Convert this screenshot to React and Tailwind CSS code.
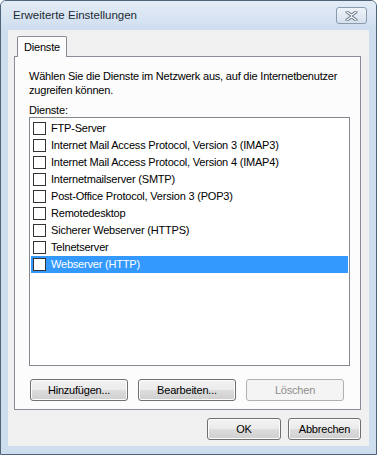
import React from "react";

const items = [
  "FTP-Server",
  "Internet Mail Access Protocol, Version 3 (IMAP3)",
  "Internet Mail Access Protocol, Version 4 (IMAP4)",
  "Internetmailserver (SMTP)",
  "Post-Office Protocol, Version 3 (POP3)",
  "Remotedesktop",
  "Sicherer Webserver (HTTPS)",
  "Telnetserver",
  "Webserver (HTTP)",
];

function Btn({ children, disabled, className = "" }) {
  return (
    <div
      className={
        "flex h-[22px] items-center justify-center rounded-[3px] border text-[11px] tracking-[-0.2px] " +
        (disabled
          ? "border-[#adb2b5] bg-[#f4f4f4] text-[#8d8d8d] "
          : "border-[#707070] bg-[linear-gradient(#f2f2f2_0%,#ebebeb_50%,#dddddd_50%,#cfcfcf_100%)] text-black shadow-[inset_0_0_0_1px_#fcfcfc] ") +
        className
      }
    >
      {children}
    </div>
  );
}

export default function App() {
  return (
    <div
      className="relative h-[455px] w-[377px] overflow-hidden rounded-t-[6px] border border-[#4f6478] bg-[#cedeef] text-black"
      style={{ fontFamily: '"Liberation Sans", Arial, sans-serif' }}
    >
      {/* title bar */}
      <div className="flex h-[29px] items-center justify-between bg-[linear-gradient(#e3ecf6,#cedeef)] pl-[12px] pr-[9px]">
        <span className="text-[11.5px] text-[#1e2a36]">Erweiterte Einstellungen</span>
        <div className="flex h-[17px] w-[31px] items-center justify-center rounded-[3px] border border-[#8a9bb0] bg-[linear-gradient(#eef3f9,#d6e1ee)]">
          <svg width="13" height="10" viewBox="0 0 13 10">
            <path
              d="M2 1 L6.5 4.2 L11 1 M2 9 L6.5 5.8 L11 9"
              stroke="#5d6b7b"
              strokeWidth="3"
              fill="none"
              strokeLinecap="round"
            />
            <path
              d="M2 1 L6.5 4.2 L11 1 M2 9 L6.5 5.8 L11 9"
              stroke="#ffffff"
              strokeWidth="1.4"
              fill="none"
              strokeLinecap="round"
            />
          </svg>
        </div>
      </div>

      {/* client area */}
      <div className="ml-[7px] flex h-[416px] w-[361px] flex-col bg-[#f0f0f0] pl-[6px] pr-[8px] pt-[6px]">
        {/* tab strip */}
        <div className="relative z-10 flex h-[20px] pl-[3px]">
          <div className="-mb-px flex h-[21px] w-[50px] items-center justify-center rounded-t-[2px] border border-b-0 border-[#898c95] bg-[#fcfcfc] text-[11px] tracking-[-0.2px]">
            Dienste
          </div>
        </div>
        {/* panel */}
        <div className="flex h-[354px] flex-col border border-[#898c95] bg-[#fcfcfc] px-[14px] pt-[12px] tracking-[-0.2px]">
          <div className="whitespace-nowrap text-[11px] leading-[14px]">
            Wählen Sie die Dienste im Netzwerk aus, auf die Internetbenutzer
            <br />
            zugreifen können.
          </div>
          <div className="mt-[6px] text-[11px] leading-[14px]">Dienste:</div>
          <div className="h-[249px] w-[321px] border border-[#828790] bg-white px-px pt-[2px]">
            {items.map((t, i) => {
              const sel = i === items.length - 1;
              return (
                <div
                  key={t}
                  className={
                    "flex h-[17px] items-center pl-[2px] text-[11px] " +
                    (sel ? "bg-[#3399ff] text-white" : "")
                  }
                >
                  <div className="h-[13px] w-[13px] border border-[#333333] bg-white" />
                  <span className="ml-[5px] whitespace-nowrap">{t}</span>
                </div>
              );
            })}
          </div>
          <div className="mt-[13px] flex gap-[10px] pl-px">
            <Btn className="w-[98px]">Hinzufügen...</Btn>
            <Btn className="w-[98px]">Bearbeiten...</Btn>
            <Btn className="w-[98px]" disabled>
              Löschen
            </Btn>
          </div>
        </div>
        <div className="mt-[8px] flex justify-end gap-[7px]">
          <Btn className="w-[74px]">OK</Btn>
          <Btn className="w-[73px]">Abbrechen</Btn>
        </div>
      </div>
    </div>
  );
}
